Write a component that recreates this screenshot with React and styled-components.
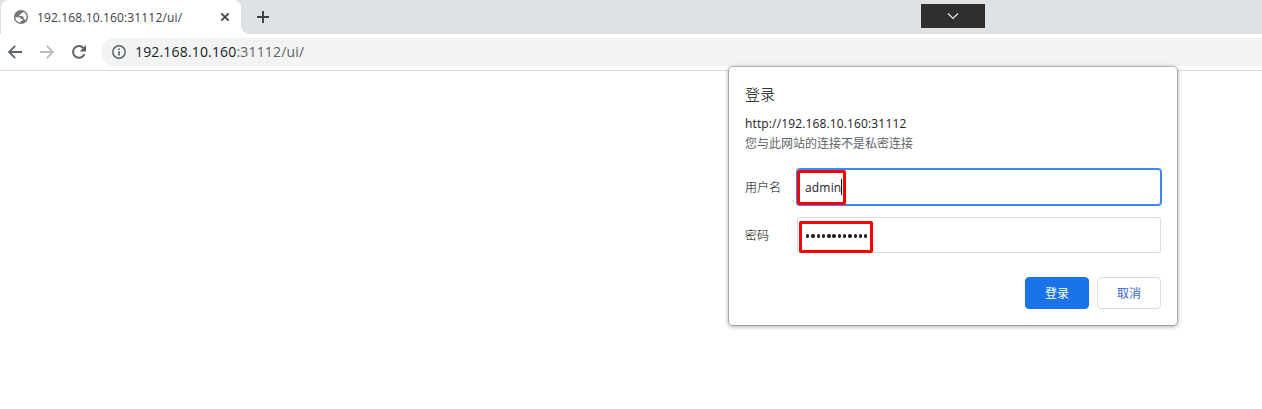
import React from "react";
import styled, { createGlobalStyle } from "styled-components";

const GlobalStyle = createGlobalStyle`
  * { box-sizing: border-box; }
  body {
    margin: 0;
    overflow: hidden;
    background: #fff;
    color: #202124;
    font: 12px/16px "Open Sans", "Noto Sans CJK SC", sans-serif;
  }
`;

const Browser = styled.div`
  position: relative;
  height: 409px;
  overflow: hidden;
`;

const TabStrip = styled.div`
  display: flex;
  align-items: center;
  height: 34px;
  background: #dee2e5;
  padding-left: 1px;
`;

const Tab = styled.div`
  position: relative;
  display: flex;
  align-items: center;
  width: 240px;
  height: 34px;
  padding: 0 8px 0 12px;
  background: #fff;
  border-radius: 8px 8px 0 0;
  color: #3c4043;

  &::after {
    content: "";
    position: absolute;
    left: 100%;
    bottom: 0;
    width: 8px;
    height: 8px;
    background: radial-gradient(circle at 100% 0, transparent 7.5px, #fff 8px);
  }
`;

const TabTitle = styled.span`
  flex: 1;
  margin-left: 8px;
  padding-top: 2px;
  letter-spacing: 0.15px;
  white-space: nowrap;
`;

const NewTab = styled.div`
  display: flex;
  margin-left: 15px;
`;

const Toolbar = styled.div`
  display: flex;
  align-items: center;
  height: 37px;
  padding: 4px 0 4px 7px;
  border-bottom: 1px solid #d9dadc;
  background: #fff;
`;

const NavIcons = styled.div`
  display: flex;
  gap: 16px;
  width: 94px;
`;

const AddressBar = styled.div`
  display: flex;
  align-items: center;
  flex: 1;
  height: 28px;
  padding-left: 11px;
  border-radius: 14px 0 0 14px;
  background: #f1f4f3;
`;

const Url = styled.span`
  margin-left: 9px;
  color: #5f6368;
  font-size: 14px;
  line-height: 20px;
  letter-spacing: 0.17px;
`;

const Host = styled.span`
  color: #202124;
`;

const PullHandle = styled.div`
  position: absolute;
  left: 921px;
  top: 4px;
  display: flex;
  align-items: center;
  justify-content: center;
  width: 64px;
  height: 24px;
  background: #2f2f2f;
`;

const Dialog = styled.form`
  position: absolute;
  left: 729px;
  top: 67px;
  width: 448px;
  height: 258px;
  padding: 16px;
  background: #fff;
  border-radius: 4px;
  box-shadow: 0 0 0 1px rgba(0, 0, 0, 0.2), 0 1px 4px 1px rgba(0, 0, 0, 0.3);
`;

const Title = styled.div`
  height: 22px;
  margin-bottom: 10px;
  color: #000;
  font-size: 15px;
  font-weight: 300;
  line-height: 22px;
`;

const Origin = styled.div`
  height: 20px;
  line-height: 18px;
  letter-spacing: 0.14px;
`;

const Warning = styled.div`
  height: 18px;
  line-height: 18px;
  color: #5f6368;
`;

const Field = styled.label`
  display: flex;
  align-items: center;
  height: 36px;
  margin-top: ${({ $first }) => ($first ? 16 : 12)}px;
`;

const Label = styled.span`
  width: 52px;
  padding-top: 2px;
  color: #000;
  font-weight: 300;
`;

const InputBox = styled.span`
  position: relative;
  display: flex;
  align-items: center;
  flex: 1;
  height: 36px;
  padding-left: 8px;
  border-radius: 3px;
  box-shadow: ${({ $focused }) =>
    $focused ? "0 0 0 1px #4285f4, inset 0 0 0 1px #4285f4" : "inset 0 0 0 1px #dadce0"};
`;

const Caret = styled.span`
  width: 1px;
  height: 16px;
  background: #111;
`;

const Highlight = styled.span`
  position: absolute;
  left: ${({ $left }) => $left}px;
  top: ${({ $top }) => $top}px;
  width: ${({ $width }) => $width}px;
  height: ${({ $height }) => $height}px;
  border: 3px solid #fb0000;
  border-radius: 2px;
`;

const Value = styled.span`
  padding-top: 2px;
  letter-spacing: 0.18px;
`;

const Dots = styled.span`
  display: flex;
  gap: 1.9px;
  margin: 2px 0 0 1px;
`;

const Dot = styled.i`
  width: 3.4px;
  height: 3.4px;
  border-radius: 50%;
  background: #202124;
`;

const Actions = styled.div`
  display: flex;
  justify-content: flex-end;
  gap: 8px;
  margin-top: 24px;
`;

const Button = styled.button`
  width: 64px;
  height: 32px;
  padding: 2px 0 0;
  border: 1px solid ${({ $primary }) => ($primary ? "#1a73e8" : "#dadce0")};
  border-radius: 4px;
  background: ${({ $primary }) => ($primary ? "#1a73e8" : "#fff")};
  color: ${({ $primary }) => ($primary ? "#fff" : "#3367c8")};
  font: inherit;
`;

const Icon = ({ size = 16, color = "#5f6368", children }) => (
  <svg width={size} height={size} viewBox="0 0 16 16" fill="none" stroke={color} strokeWidth="1.8">
    {children}
  </svg>
);

const PASSWORD_LENGTH = 12;

export default function App() {
  return (
    <Browser>
      <GlobalStyle />
      <TabStrip>
        <Tab>
          <svg width="16" height="16" viewBox="0 0 16 16">
            <circle cx="8" cy="8" r="7.1" fill="#757575" />
            <path
              d="M2.4 8.2h3.4c1.2 0 1.9.7 1.9 1.7h1.6v2H7.5v1.7C4.6 13.4 2.4 11 2.4 8.2zM6.4 7V5.5h1.7V3.9h2V2.8c2 .8 3.5 2.9 3.5 5.2 0 1.3-.4 2.3-1.2 3.3-.3-.7-.8-1.1-1.7-1.1V8.6c-.2-1-.9-1.5-1.9-1.6z"
              fill="#fff"
            />
          </svg>
          <TabTitle>192.168.10.160:31112/ui/</TabTitle>
          <Icon color="#3c4043"><path d="m4.3 4.3 7.4 7.4m0-7.4-7.4 7.4" strokeWidth="1.7" /></Icon>
        </Tab>
        <NewTab>
          <Icon size={14} color="#3c4043"><path d="M8 1.2v13.6M1.2 8h13.6" strokeWidth="2.2" /></Icon>
        </NewTab>
      </TabStrip>
      <Toolbar>
        <NavIcons>
          <Icon><path d="M15 8H2.4M8.2 1.8 2 8l6.2 6.2" /></Icon>
          <Icon color="#babcbe"><path d="M1 8h12.6M7.8 1.8 14 8l-6.2 6.2" /></Icon>
          <Icon>
            <path d="M13.4 10.1A5.9 5.9 0 1 1 12.3 3.9L14 5.6" strokeWidth="2" />
            <path d="M15 1v6.4H8.6z" fill="#5f6368" stroke="none" />
          </Icon>
        </NavIcons>
        <AddressBar>
          <Icon size={14}>
            <circle cx="8" cy="8" r="7.1" strokeWidth="1.7" />
            <path d="M8 7v5M8 4v1.8" strokeWidth="2" />
          </Icon>
          <Url><Host>192.168.10.160</Host>:31112/ui/</Url>
        </AddressBar>
      </Toolbar>
      <PullHandle>
        <svg width="12" height="8" viewBox="0 0 12 8" fill="none" stroke="#e8e8e8" strokeWidth="1.2">
          <path d="m1 1.5 5 5 5-5" />
        </svg>
      </PullHandle>
      <Dialog onSubmit={(e) => e.preventDefault()}>
        <Title>登录</Title>
        <Origin>http://192.168.10.160:31112</Origin>
        <Warning>您与此网站的连接不是私密连接</Warning>
        <Field $first>
          <Label>用户名</Label>
          <InputBox $focused>
            <Value>admin</Value>
            <Caret />
            <Highlight $left={0} $top={1} $width={49} $height={35} />
          </InputBox>
        </Field>
        <Field>
          <Label>密码</Label>
          <InputBox>
            <Dots>
              {Array.from({ length: PASSWORD_LENGTH }, (_, i) => <Dot key={i} />)}
            </Dots>
            <Highlight $left={2} $top={4} $width={74} $height={32} />
          </InputBox>
        </Field>
        <Actions>
          <Button type="submit" $primary>登录</Button>
          <Button type="button">取消</Button>
        </Actions>
      </Dialog>
    </Browser>
  );
}
